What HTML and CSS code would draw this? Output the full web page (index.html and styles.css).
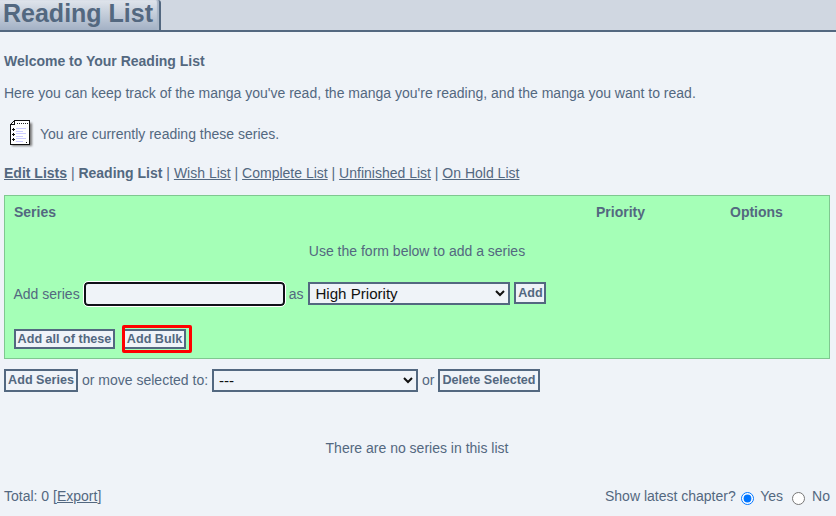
FILE: index.html
```html
<!DOCTYPE html>
<html lang="en">
<head>
<meta charset="utf-8">
<title>Reading List</title>
<link rel="stylesheet" href="styles.css">
</head>
<body>
<header class="topbar"><h1 class="tab">Reading List</h1></header>
<main class="page">
  <p class="welcome"><b>Welcome to Your Reading List</b></p>
  <p class="intro">Here you can keep track of the manga you've read, the manga you're reading, and the manga you want to read.</p>
  <div class="status">
    <svg class="list-icon" width="26" height="30" viewBox="0 0 26 30">
      <path class="shadow" d="M4 5H24V28H4z"/>
      <path class="sheet" d="M6.500 2.500H21.500V26.500H2.500V6.500z" shape-rendering="crispEdges"/>
      <path class="ink" d="M2.500 6.500H6.500V2.500" shape-rendering="crispEdges"/>
      <path class="dots" d="M9 5.500H20"/>
      <path class="rule" d="M8 10.500H18M8 13.500H15M8 15.500H18M8 18.500H15M8 20.500H18M8 23.500H15"/>
      <path class="ink" d="M4 11.500H7M5.500 10V13M4 16.500H7M5.500 15V18M4 21.500H7M5.500 20V23M18 24.500H19"/>
    </svg>
    <span>You are currently reading these series.</span>
  </div>
  <nav class="lists"><a href="#"><b>Edit Lists</b></a> | <b>Reading List</b> | <a href="#">Wish List</a> | <a href="#">Complete List</a> | <a href="#">Unfinished List</a> | <a href="#">On Hold List</a></nav>
  <section class="panel">
    <div class="columns"><b>Series</b><b>Priority</b><b>Options</b></div>
    <p class="hint">Use the form below to add a series</p>
    <div class="add-row">
      <label for="series">Add series</label><input class="series" id="series" type="text">
      <span class="as">as</span><select class="priority"><option>High Priority</option></select>
      <button class="btn add">Add</button>
    </div>
    <div class="bulk-row"><button class="btn all">Add all of these</button><span class="marker"><button class="btn bulk">Add Bulk</button></span></div>
  </section>
  <div class="actions">
    <button class="btn add-series">Add Series</button><span class="move">or move selected to:</span><select class="target"><option>---</option></select><span class="or">or</span><button class="btn delete">Delete Selected</button>
  </div>
  <p class="empty">There are no series in this list</p>
  <footer class="bottom">
    <span>Total: 0 [<a href="#">Export</a>]</span>
    <span class="latest"><span>Show latest chapter?</span><input type="radio" name="latest" id="yes" checked><label for="yes">Yes</label><input type="radio" name="latest" id="no"><label class="no" for="no">No</label></span>
  </footer>
</main>
</body>
</html>
```
FILE: styles.css
```css
* { box-sizing: border-box; }
body {
  margin: 0;
  height: 516px;
  overflow: hidden;
  background: #eff3f8;
  color: #536880;
  font: 14px/16px "Liberation Sans", Arial, sans-serif;
}
p { margin: 0; }
a { color: inherit; text-underline-offset: 1px; }
.topbar { height: 32px; background: #d0d7e1; border-bottom: 2px solid #536880; }
.tab {
  width: 161px;
  height: 30px;
  margin: 0;
  padding-left: 3px;
  font-size: 25px;
  line-height: 27px;
  white-space: nowrap;
  border-right: 2px solid #536880;
  border-top-right-radius: 3px;
  background: linear-gradient(#e0e5ec, #a3b1c5);
  box-shadow: inset -2px 0 1px #aab6c7;
}
.page { padding: 0 6px 0 4px; }
.welcome { padding-top: 21px; }
.intro { padding-top: 16px; }
.status { display: flex; height: 30px; margin-top: 17px; gap: 6px; padding-left: 4px; line-height: 32px; }
.shadow { fill: #777; filter: blur(1.2px); }
.sheet { fill: #fff; stroke: #111; }
.ink { fill: none; stroke: #111; }
.dots { stroke: #222; stroke-dasharray: 1 1; }
.rule { stroke: #ccccff; }
.lists { margin-top: 17px; height: 16px; white-space: nowrap; }
.panel { height: 164px; margin-top: 14px; background: #a5ffb7; border: 1px solid #7fc890; }
.columns { display: grid; grid-template-columns: 582px 134px auto; padding: 8px 0 0 9px; }
.hint { padding-top: 23px; text-align: center; }
.add-row { display: flex; align-items: center; height: 24px; margin-top: 23px; padding-left: 8.500px; }
.series {
  width: 201px;
  height: 24px;
  margin-left: 4px;
  background: #eff3f8;
  border: 2px solid #101018;
  border-radius: 4px;
  outline: 1px solid #fff;
}
.as { margin-left: 4px; }
select {
  color: #111;
  background: #eff3f8;
  border: 2px solid #536880;
  border-radius: 0;
  font: 15.1px "Liberation Sans", Arial, sans-serif;
  height: 23px;
  padding: 0;
}
.priority { width: 202px; margin: 0 0 1px 5px; padding-left: 1px; }
.btn {
  padding: 0;
  color: #536880;
  background: #eff3f8;
  border: 2px solid #536880;
  font: bold 12.6px/14px "Liberation Sans", Arial, sans-serif;
  white-space: nowrap;
}
.add { width: 32px; height: 22px; margin: 0 0 2px 4px; padding-bottom: 1px; }
.bulk-row { display: flex; align-items: center; height: 28px; margin-top: 19px; padding-left: 9px; }
.all { width: 101px; height: 20px; }
.marker { width: 70px; height: 28px; margin-left: 7px; padding: 1px 0 0 0; border: 3px solid #f00; border-radius: 2px; display: flex; }
.bulk { width: 61px; height: 20px; border-left-width: 0; }
.actions { display: flex; height: 23px; margin-top: 10px; line-height: 23px; white-space: nowrap; }
.add-series { width: 74px; height: 23px; padding-bottom: 2px; }
.move { margin-left: 4px; }
.target { width: 206px; margin-left: 4px; padding-left: 1px; }
.or { margin-left: 4px; }
.delete { width: 102px; height: 23px; margin-left: 3px; padding: 0 0 2px 1px; }
.empty { margin-top: 48px; text-align: center; }
.bottom { display: flex; justify-content: space-between; margin-top: 32px; white-space: nowrap; }
.latest { display: flex; }
.latest input { width: 13px; height: 13px; margin: 4px 6px 0 5.500px; }
.latest #no { margin: 4px 7px 0 9px; }
```
